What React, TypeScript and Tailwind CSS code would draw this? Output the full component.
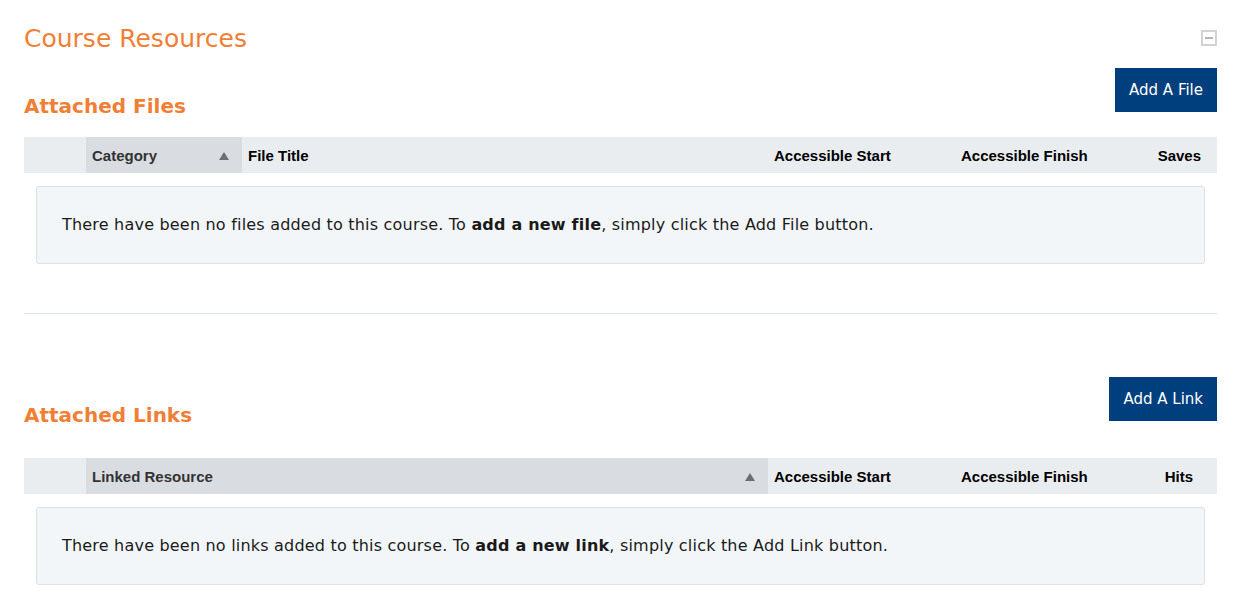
const body = "font-['DejaVu_Sans',Verdana,sans-serif]";
const head = "font-['Liberation_Sans',Arial,sans-serif]";

type Col = { label: string; className: string; sort?: boolean; right?: boolean };

function SortArrow() {
  return (
    <svg width="10" height="8" viewBox="0 0 10 8" className="shrink-0">
      <path d="M5 0 L10 8 L0 8 Z" fill="#6c6f72" />
    </svg>
  );
}

function HeaderRow({ cols }: { cols: Col[] }) {
  return (
    <div className={`flex h-9 items-center bg-[#eaedf0] text-[15px] font-bold text-black ${head}`}>
      <div className="w-[62px] shrink-0 self-stretch" />
      {cols.map((c) => (
        <div
          key={c.label}
          className={`flex items-center self-stretch pt-[2px] pl-1.5 ${c.className} ${
            c.sort ? 'bg-[#d9dde1] pr-[13px] text-[#333]' : ''
          }`}
        >
          <span className={`flex-1 ${c.right ? 'text-right' : ''}`}>{c.label}</span>
          {c.sort && <SortArrow />}
        </div>
      ))}
    </div>
  );
}

function EmptyBox({ noun, button }: { noun: string; button: string }) {
  return (
    <div className="mx-3 mt-[13px] flex h-[78px] items-center rounded-[3px] border border-[#dde1e5] bg-[#f3f6f9] px-[25px] text-[16px] tracking-[0.2px] text-[#1a1a1a]">
      <p>
        There have been no {noun}s added to this course. To <b>add a new {noun}</b>, simply click the{' '}
        {button} button.
      </p>
    </div>
  );
}

export default function App() {
  return (
    <main className={`min-h-screen bg-white px-6 pt-[23px] ${body}`}>
      <div className="flex items-start justify-between">
        <h1 className="text-[25px] leading-8 text-[#f07f35]">Course Resources</h1>
        <button
          type="button"
          title="Collapse"
          className="mt-[7px] flex size-4 items-center justify-center border-2 border-[#d3d3d3]"
        >
          <span className="h-0.5 w-2 bg-[#b5b5b5]" />
        </button>
      </div>

      <section>
        <div className="mt-[13px] flex items-start justify-between">
          <h2 className="mt-[23px] text-[20px] font-bold leading-[30px] text-[#f07f35]">Attached Files</h2>
          <button type="button" className="h-11 bg-[#003f7d] px-[14px] text-[15px] text-white">
            Add A File
          </button>
        </div>
        <div className="mt-4">
          <HeaderRow
            cols={[
              { label: 'Category', className: 'w-[156px]', sort: true },
              { label: 'File Title', className: 'flex-1' },
              { label: 'Accessible Start', className: 'w-[187px]' },
              { label: 'Accessible Finish', className: 'w-[170px]' },
              { label: 'Saves', className: 'w-[92px] pr-4', right: true },
            ]}
          />
          <EmptyBox noun="file" button="Add File" />
        </div>
      </section>

      <hr className="mt-[49px] border-[#dee2e6]" />

      <section>
        <div className="mt-[63px] flex items-start justify-between">
          <h2 className="mt-[23px] text-[20px] font-bold leading-[30px] text-[#f07f35]">Attached Links</h2>
          <button type="button" className="h-11 bg-[#003f7d] px-[14px] text-[15px] text-white">
            Add A Link
          </button>
        </div>
        <div className="mt-[28px]">
          <HeaderRow
            cols={[
              { label: 'Linked Resource', className: 'w-[682px]', sort: true },
              { label: 'Accessible Start', className: 'w-[187px]' },
              { label: 'Accessible Finish', className: 'w-[170px]' },
              { label: 'Hits', className: 'flex-1 pr-6', right: true },
            ]}
          />
          <EmptyBox noun="link" button="Add Link" />
        </div>
      </section>
    </main>
  );
}
